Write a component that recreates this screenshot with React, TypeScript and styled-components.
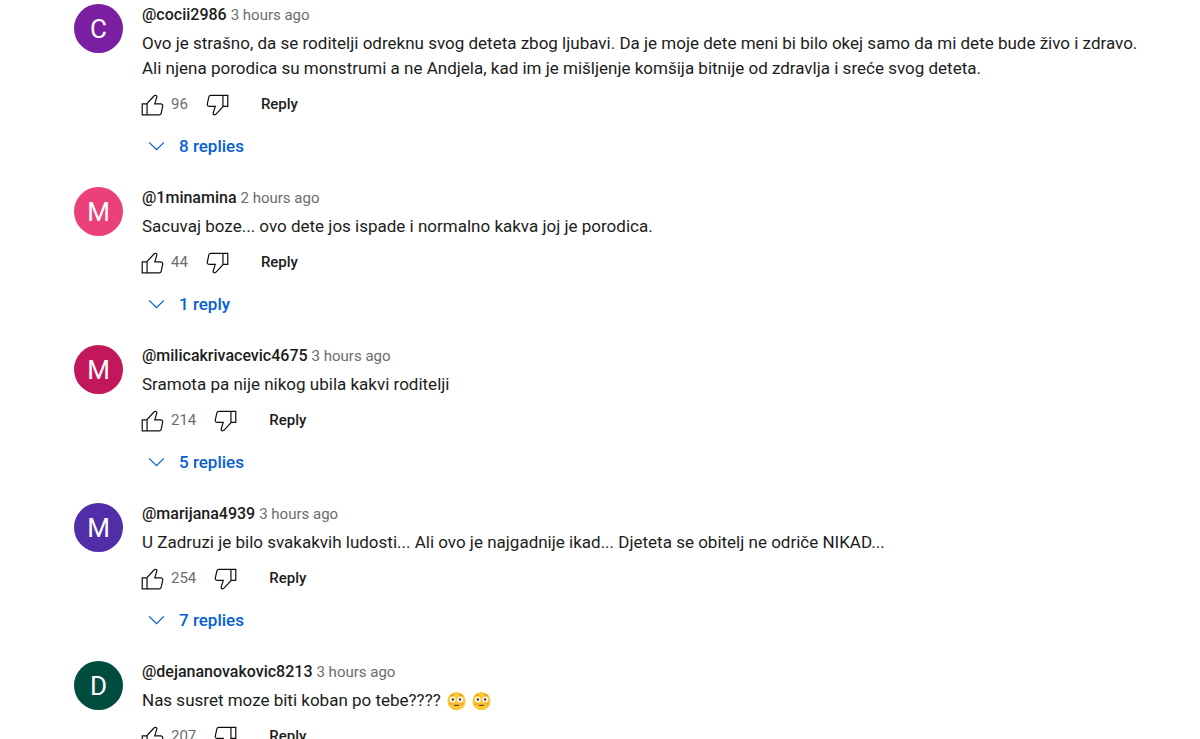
import React from "react";
import styled, { createGlobalStyle } from "styled-components";

const GlobalStyle = createGlobalStyle`
  *, *::before, *::after { box-sizing: border-box; }
  body {
    margin: 0;
    background: #fff;
    color: #1c1c1c;
    font-family: Roboto, "Liberation Sans", sans-serif;
  }
  #root { height: 100vh; overflow: hidden; }
`;

const CommentList = styled.main`
  display: flex;
  flex-direction: column;
  gap: 19px;
  padding: 4px 48px 0 74px;
`;

const Comment = styled.article`
  display: flex;
  align-items: flex-start;
  gap: 19px;
`;

const Avatar = styled.a<{ $color: string }>`
  flex: none;
  display: flex;
  align-items: center;
  justify-content: center;
  width: 49px;
  height: 49px;
  border-radius: 50%;
  background: ${(p) => p.$color};
  color: #fff;
  font-size: 26px;
  line-height: 48px;
  text-decoration: none;
`;

const Body = styled.div`
  flex: 1;
  min-width: 0;
`;

const Header = styled.header`
  display: flex;
  align-items: baseline;
  gap: 4px;
  height: 21px;
  line-height: 21px;
`;

const Author = styled.a`
  color: #1c1c1c;
  font-size: 16px;
  font-weight: 500;
  text-decoration: none;
`;

const Time = styled.a`
  color: #6c6c6c;
  font-size: 15px;
  text-decoration: none;
`;

const Message = styled.p`
  margin: 6px 0 0;
  font-size: 17px;
  line-height: 25px;
  white-space: pre-line;
`;

const Toolbar = styled.div`
  display: flex;
  align-items: center;
  height: 40px;
  margin: 3px 0 0 -4px;
`;

const IconButton = styled.button`
  display: flex;
  padding: 0;
  border: 0;
  background: none;
  color: #0f0f0f;
  cursor: pointer;
`;

const Count = styled.span`
  margin: 0 15px 0 4px;
  color: #6c6c6c;
  font-size: 15px;
  line-height: 20px;
`;

const ReplyButton = styled.button`
  margin-left: 13px;
  padding: 0 16px;
  border: 0;
  background: none;
  color: #1c1c1c;
  font: 500 15px/40px Roboto, "Liberation Sans", sans-serif;
  cursor: pointer;
`;

const RepliesButton = styled.button`
  display: flex;
  align-items: center;
  gap: 8px;
  height: 44px;
  padding: 0;
  border: 0;
  background: none;
  color: #065fd4;
  font: 500 17px/44px Roboto, "Liberation Sans", sans-serif;
  cursor: pointer;
`;

const Emoji = styled.svg`
  width: 19px;
  height: 20px;
  margin-left: 6px;
  vertical-align: -5px;
`;

const LikeIcon = () => (
  <svg width="29" height="29" viewBox="0 0 24 24" fill="currentColor" aria-hidden="true">
    <path d="M18.77,11h-4.23l1.52-4.94C16.38,5.03,15.54,4,14.38,4c-0.58,0-1.14,0.24-1.52,0.65L7,11H3v10h4h1h9.43c1.06,0,1.98-0.67,2.19-1.61l1.34-6C21.23,12.15,20.18,11,18.77,11z M7,20H4v-8h3V20z M19.98,13.17l-1.34,6C18.54,19.65,18.03,20,17.43,20H8v-8.61l5.6-6.06C13.79,5.12,14.08,5,14.38,5c0.26,0,0.5,0.11,0.63,0.3c0.07,0.1,0.15,0.26,0.09,0.47l-1.52,4.94L13.18,12h1.35h4.23c0.41,0,0.8,0.17,1.03,0.46C19.92,12.61,20.05,12.86,19.98,13.17z" />
  </svg>
);

const DislikeIcon = () => (
  <svg width="29" height="29" viewBox="0 0 24 24" fill="currentColor" aria-hidden="true">
    <path d="M17,4h-1H6.57C5.5,4,4.59,4.67,4.38,5.61l-1.34,6C2.77,12.85,3.82,14,5.23,14h4.23l-1.52,4.94C7.62,19.97,8.46,21,9.62,21c0.58,0,1.14-0.24,1.52-0.65L17,14h4V4H17z M10.4,19.67C10.21,19.88,9.92,20,9.62,20c-0.26,0-0.5-0.11-0.63-0.3c-0.07-0.1-0.15-0.26-0.09-0.47l1.52-4.94l0.4-1.29H9.46H5.23c-0.41,0-0.8-0.17-1.03-0.46c-0.12-0.15-0.25-0.4-0.18-0.72l1.34-6C5.46,5.35,5.97,5,6.57,5H16v8.61L10.4,19.67z M20,13h-3V5h3V13z" />
  </svg>
);

const ChevronIcon = () => (
  <svg width="29" height="29" viewBox="0 0 24 24" fill="none" stroke="currentColor" aria-hidden="true">
    <path d="M5.9 8.6 12 14.7l6.1-6.1" />
  </svg>
);

const FlushedFace = () => (
  <Emoji viewBox="0 0 20 20" role="img" aria-label="flushed face">
    <circle cx="10" cy="10" r="9.6" fill="#fcc934" />
    <ellipse cx="4.6" cy="13" rx="2.8" ry="1.8" fill="#f79a3c" opacity="0.6" />
    <ellipse cx="15.4" cy="13" rx="2.8" ry="1.8" fill="#f79a3c" opacity="0.6" />
    <path d="M3.6 4.6Q5 3.2 7 3.4M16.4 4.6Q15 3.2 13 3.4" fill="none" stroke="#b5762a" strokeWidth="0.8" strokeLinecap="round" />
    <circle cx="6" cy="8.4" r="3" fill="#fff" />
    <circle cx="14" cy="8.4" r="3" fill="#fff" />
    <circle cx="6.2" cy="8.4" r="1.3" fill="#4a3028" />
    <circle cx="13.8" cy="8.4" r="1.3" fill="#4a3028" />
    <path d="M7.8 14.6h4.4" stroke="#6d4326" strokeWidth="1.3" strokeLinecap="round" />
  </Emoji>
);

type CommentData = {
  author: string;
  letter: string;
  color: string;
  time: string;
  text: string;
  likes: number;
  replies?: string;
  flushed?: number;
};

const comments: CommentData[] = [
  {
    author: "@cocii2986",
    letter: "C",
    color: "#7b1fa2",
    time: "3 hours ago",
    text: "Ovo je strašno, da se roditelji odreknu svog deteta zbog ljubavi. Da je moje dete meni bi bilo okej samo da mi dete bude živo i zdravo.\nAli njena porodica su monstrumi a ne Andjela, kad im je mišljenje komšija bitnije od zdravlja i sreće svog deteta.",
    likes: 96,
    replies: "8 replies",
  },
  {
    author: "@1minamina",
    letter: "M",
    color: "#ec407a",
    time: "2 hours ago",
    text: "Sacuvaj boze... ovo dete jos ispade i normalno kakva joj je porodica.",
    likes: 44,
    replies: "1 reply",
  },
  {
    author: "@milicakrivacevic4675",
    letter: "M",
    color: "#c2185b",
    time: "3 hours ago",
    text: "Sramota pa nije nikog ubila kakvi roditelji",
    likes: 214,
    replies: "5 replies",
  },
  {
    author: "@marijana4939",
    letter: "M",
    color: "#512da8",
    time: "3 hours ago",
    text: "U Zadruzi je bilo svakakvih ludosti... Ali ovo je najgadnije ikad... Djeteta se obitelj ne odriče NIKAD...",
    likes: 254,
    replies: "7 replies",
  },
  {
    author: "@dejananovakovic8213",
    letter: "D",
    color: "#004d40",
    time: "3 hours ago",
    text: "Nas susret moze biti koban po tebe????",
    likes: 207,
    flushed: 2,
  },
];

export default function App() {
  return (
    <>
      <GlobalStyle />
      <CommentList>
        {comments.map((c) => (
          <Comment key={c.author}>
            <Avatar href="#" $color={c.color} aria-label={c.author}>
              {c.letter}
            </Avatar>
            <Body>
              <Header>
                <Author href="#">{c.author}</Author>
                <Time href="#">{c.time}</Time>
              </Header>
              <Message>
                {c.text}
                {Array.from({ length: c.flushed ?? 0 }, (_, i) => (
                  <FlushedFace key={i} />
                ))}
              </Message>
              <Toolbar>
                <IconButton type="button" aria-label="Like">
                  <LikeIcon />
                </IconButton>
                <Count>{c.likes}</Count>
                <IconButton type="button" aria-label="Dislike">
                  <DislikeIcon />
                </IconButton>
                <ReplyButton type="button">Reply</ReplyButton>
              </Toolbar>
              {c.replies && (
                <RepliesButton type="button">
                  <ChevronIcon />
                  {c.replies}
                </RepliesButton>
              )}
            </Body>
          </Comment>
        ))}
      </CommentList>
    </>
  );
}
